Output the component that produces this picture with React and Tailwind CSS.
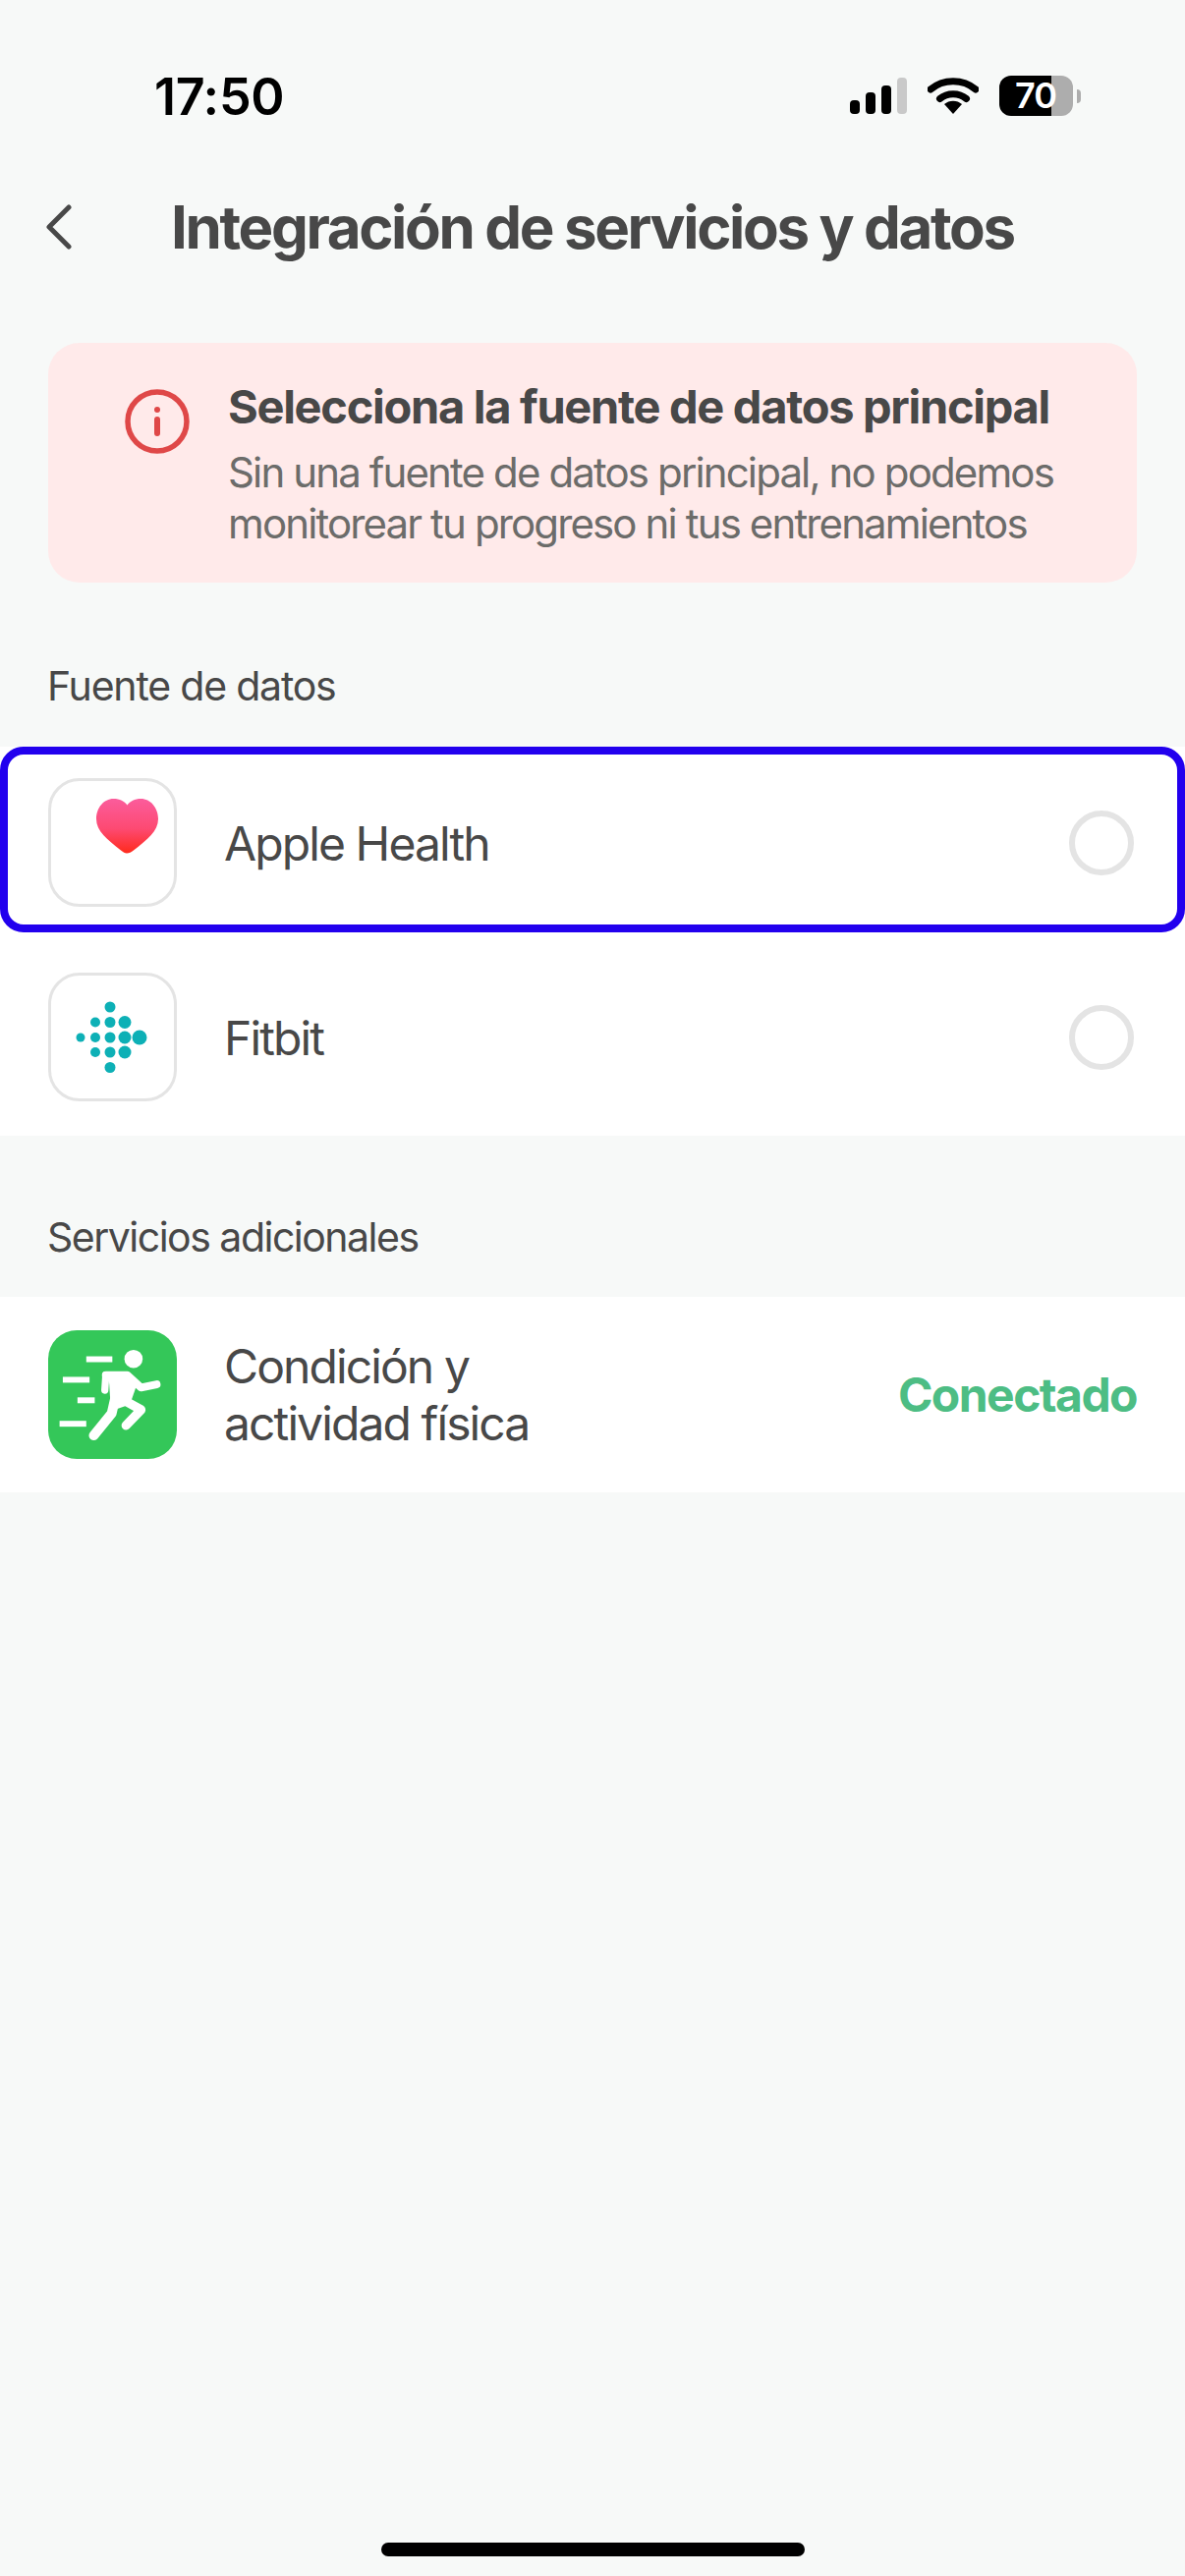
const Signal = () => (
  <svg width="58" height="38" viewBox="0 0 58 38">
    <rect x="0" y="23" width="10" height="14" rx="4" fill="#000" />
    <rect x="16" y="15" width="10" height="22" rx="4" fill="#000" />
    <rect x="32" y="8" width="10" height="29" rx="4" fill="#000" />
    <rect x="48" y="0" width="10" height="37" rx="4" fill="#c9c9c9" />
  </svg>
);

const Wifi = () => (
  <svg width="52" height="38" viewBox="0 0 52 38">
    <path d="M3 12 C16 1 36 1 49 12" fill="none" stroke="#000" strokeWidth="7" strokeLinecap="round" strokeLinejoin="round" />
    <path d="M12.500 21.500 C20 15 32 15 39.500 21.500" fill="none" stroke="#000" strokeWidth="7" strokeLinecap="round" />
    <path d="M17 27 C22 22.500 30 22.500 35 27 L26 37 Z" fill="#000" />
  </svg>
);

const Battery = () => (
  <div className="relative flex h-[41px] w-[84px] items-center">
    <div className="flex h-[41px] w-[75px] overflow-hidden rounded-[12px]">
      <div className="h-full w-[53px] bg-black" />
      <div className="h-full w-[22px] bg-[#adadad]" />
    </div>
    <div className="ml-[4px] h-[14px] w-[4px] rounded-r-full bg-[#adadad]" />
    <span className="absolute left-[16px] top-0 text-[36px] leading-[41px] font-semibold tracking-[-1px] text-white">70</span>
  </div>
);

const Heart = () => (
  <svg width="131" height="131" viewBox="0 0 131 131" className="absolute -left-[3px] -top-[3px]">
    <defs>
      <linearGradient id="heartGrad" x1="0" y1="0" x2="0" y2="1">
        <stop offset="0" stopColor="#fb5c9c" />
        <stop offset="0.55" stopColor="#fd4a72" />
        <stop offset="1" stopColor="#ff2a1c" />
      </linearGradient>
    </defs>
    <path
      d="M80 76.500 C78 76.500 76.500 75.500 74 73.500 C60 62.500 49 54 49 41.500 C49 30.500 56.500 21 66.500 21 C73 21 77.500 23.500 80.500 27.500 C83.500 23.500 88 21 94.500 21 C104 21 112 30 112 41.500 C112 54 101 62.500 87 73.500 C84.500 75.500 82.500 76.500 80 76.500 Z"
      fill="url(#heartGrad)"
    />
  </svg>
);

const Fitbit = () => {
  const dots = [
    [63, 35, 5.500], [63, 50.500, 5.500], [48, 50.500, 5], [78, 50.500, 6.500],
    [33, 66, 4.500], [48, 66, 5], [63, 66, 5.500], [78, 66, 6.500], [93, 66, 7.500],
    [48, 81, 5], [63, 81, 5.500], [78, 81, 6.500], [63, 96.500, 5.500],
  ];
  return (
    <svg width="131" height="131" viewBox="0 0 131 131" className="absolute -left-[3px] -top-[3px]">
      {dots.map(([x, y, r]) => (
        <circle key={`${x}-${y}`} cx={x} cy={y} r={r} fill="#0db0b6" />
      ))}
    </svg>
  );
};

const Runner = () => (
  <svg width="131" height="131" viewBox="55 70 395 395" className="shrink-0">
    <rect x="55" y="70" width="395" height="395" rx="88" fill="#34c759" />
    <circle cx="317" cy="158" r="28" fill="#fff" />
    <rect x="172" y="150" width="80" height="18" fill="#fff" />
    <rect x="100" y="213" width="82" height="18" fill="#fff" />
    <rect x="145" y="276" width="53" height="18" fill="#fff" />
    <rect x="90" y="348" width="82" height="18" fill="#fff" />
    <path d="M232 208 L298 208 L340 246 L388 236" fill="none" stroke="#fff" strokeWidth="24" strokeLinecap="round" strokeLinejoin="round" />
    <path d="M232 208 L229 254" fill="none" stroke="#fff" strokeWidth="22" strokeLinecap="round" />
    <path d="M240 200 L300 200 L326 240 L306 298 L248 318 Z" fill="#fff" />
    <path d="M266 255 L250 325 L195 393" fill="none" stroke="#fff" strokeWidth="30" strokeLinecap="round" strokeLinejoin="round" />
    <path d="M282 282 L340 314 L294 362" fill="none" stroke="#fff" strokeWidth="28" strokeLinecap="round" strokeLinejoin="round" />
  </svg>
);

const IconBox = ({ children }) => (
  <div className="relative h-[131px] w-[131px] shrink-0 rounded-[32px] border-[3px] border-[#e4e4e4] bg-white">
    {children}
  </div>
);

const Radio = () => <div className="h-[66px] w-[66px] shrink-0 rounded-full border-[6px] border-[#e4e4e4]" />;

export default function App() {
  return (
    <div className="flex h-[2622px] w-[1206px] flex-col overflow-hidden bg-[#f7f9f8] font-['Inter',sans-serif] text-[#484848]">
      <div className="flex h-[196px] shrink-0 items-start justify-between pt-[73px] pl-[157px] pr-[105px]">
        <span className="text-[52px] leading-[52px] font-semibold tracking-[-0.3px] text-black">17:50</span>
        <div className="flex items-center gap-[21px] pt-[4px]">
          <Signal />
          <Wifi />
          <Battery />
        </div>
      </div>

      <div className="flex h-[70px] shrink-0 items-center pl-[46px]">
        <svg width="28" height="46" viewBox="0 0 28 46" className="shrink-0">
          <path d="M24 3 L4 23 L24 43" fill="none" stroke="#484848" strokeWidth="5" strokeLinecap="round" strokeLinejoin="round" />
        </svg>
        <h1 className="ml-[100px] text-[60px] leading-[70px] font-bold tracking-[-2.36px] whitespace-nowrap">
          Integración de servicios y datos
        </h1>
      </div>

      <div className="mx-[49px] mt-[83px] flex h-[244px] shrink-0 items-start rounded-[32px] bg-[#ffeaea] pt-[38px] pl-[78px]">
        <svg width="66" height="66" viewBox="0 0 66 66" className="mt-[9px] shrink-0">
          <circle cx="33" cy="33" r="30" fill="none" stroke="#df4848" strokeWidth="5.500" />
          <circle cx="33" cy="21" r="3" fill="#df4848" />
          <path d="M33 31 L33 45" stroke="#df4848" strokeWidth="6" strokeLinecap="round" />
        </svg>
        <div className="ml-[39px] flex flex-col">
          <span className="text-[47px] leading-[54px] font-bold tracking-[-1.3px] whitespace-nowrap">
            Selecciona la fuente de datos principal
          </span>
          <span className="mt-[14px] text-[42px] leading-[52px] tracking-[-1.87px] whitespace-nowrap text-[#6c6c6a]">
            Sin una fuente de datos principal, no podemos
            <br />
            monitorear tu progreso ni tus entrenamientos
          </span>
        </div>
      </div>

      <div className="mt-[81px] h-[48px] shrink-0 pl-[48px] text-[41px] leading-[48px] tracking-[-1.2px]">Fuente de datos</div>

      <div className="mt-[38px] flex shrink-0 flex-col bg-white">
        <div className="flex h-[189px] items-start rounded-[24px] border-[8px] border-[#2200ee] pt-[24px] pr-[44px] pl-[41px]">
          <IconBox><Heart /></IconBox>
          <span className="ml-[48px] flex-1 self-center pb-[16px] text-[48px] leading-[58px] tracking-[-1.9px]">Apple Health</span>
          <div className="mt-[33px]"><Radio /></div>
        </div>
        <div className="flex h-[207px] items-start pt-[41px] pr-[52px] pl-[49px]">
          <IconBox><Fitbit /></IconBox>
          <span className="ml-[48px] flex-1 pt-[38px] text-[48px] leading-[58px] tracking-[-1.9px]">Fitbit</span>
          <div className="mt-[33px]"><Radio /></div>
        </div>
      </div>

      <div className="mt-[79px] h-[48px] shrink-0 pl-[48px] text-[41px] leading-[48px] tracking-[-1.5px]">Servicios adicionales</div>

      <div className="mt-[37px] flex h-[199px] shrink-0 items-center bg-white pr-[49px] pl-[49px]">
        <Runner />
        <span className="ml-[48px] flex-1 text-[48px] leading-[58px] tracking-[-1.9px]">
          Condición y
          <br />
          actividad física
        </span>
        <span className="text-[48px] leading-[58px] font-bold tracking-[-1.55px] text-[#4dbd84]">Conectado</span>
      </div>

      <div className="flex flex-1 items-end justify-center pb-[20px]">
        <div className="h-[14px] w-[431px] rounded-full bg-black" />
      </div>
    </div>
  );
}
